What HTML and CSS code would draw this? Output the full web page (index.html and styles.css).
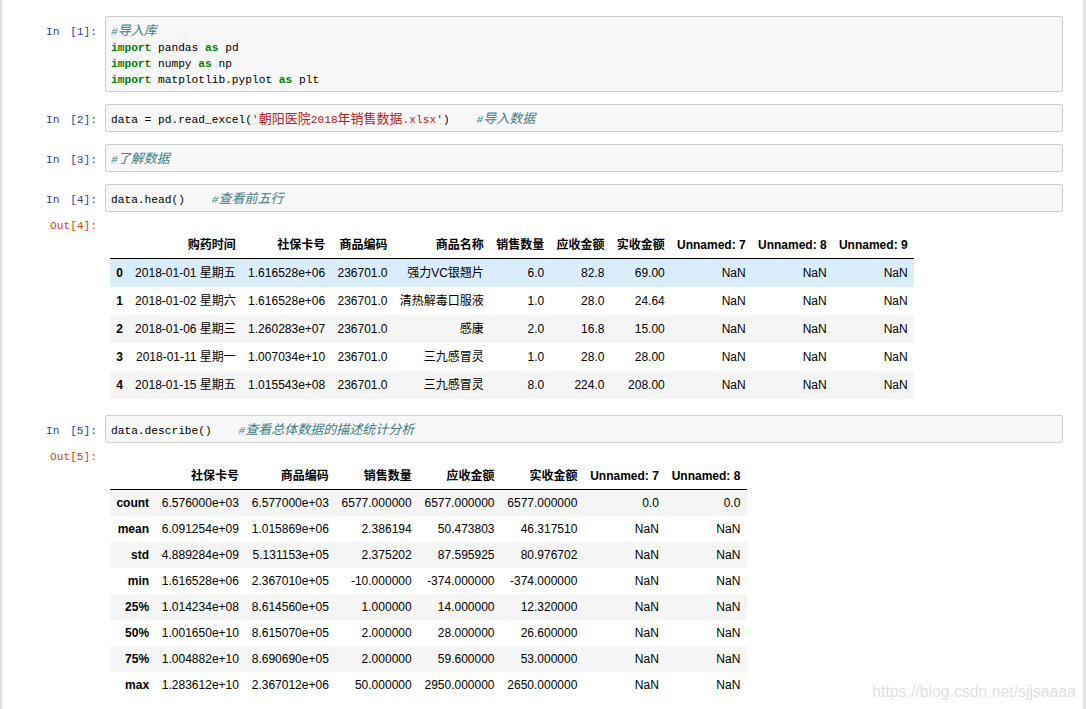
FILE: index.html
```html
<!DOCTYPE html>
<html lang="zh">
<head>
<meta charset="utf-8">
<title>Notebook</title>
<link rel="stylesheet" href="styles.css">
</head>
<body>
<div class="nb">
  <div class="cell">
    <div class="prompt pin">In [1]:</div>
    <div class="input"><pre><span class="c">#<span class="zh">导入库</span></span>
<span class="k">import</span> pandas <span class="k">as</span> pd
<span class="k">import</span> numpy <span class="k">as</span> np
<span class="k">import</span> matplotlib.pyplot <span class="k">as</span> plt</pre></div>
  </div>
  <div class="cell">
    <div class="prompt pin">In [2]:</div>
    <div class="input"><pre>data = pd.read_excel(<span class="s">'<span class="zh">朝阳医院</span>2018<span class="zh">年销售数据</span>.xlsx'</span>)    <span class="c">#<span class="zh">导入数据</span></span></pre></div>
  </div>
  <div class="cell">
    <div class="prompt pin">In [3]:</div>
    <div class="input"><pre><span class="c">#<span class="zh">了解数据</span></span></pre></div>
  </div>
  <div class="cell">
    <div class="prompt pin">In [4]:</div>
    <div class="input"><pre>data.head()    <span class="c">#<span class="zh">查看前五行</span></span></pre></div>
  </div>
  <div class="cell out">
    <div class="prompt pout">Out[4]:</div>
    <div class="output">
      <table class="df tall">
        <thead>
          <tr><th></th><th>购药时间</th><th>社保卡号</th><th>商品编码</th><th>商品名称</th><th>销售数量</th><th>应收金额</th><th>实收金额</th><th>Unnamed: 7</th><th>Unnamed: 8</th><th>Unnamed: 9</th></tr>
        </thead>
        <tbody>
          <tr class="hover"><th>0</th><td>2018-01-01 星期五</td><td>1.616528e+06</td><td>236701.0</td><td>强力VC银翘片</td><td>6.0</td><td>82.8</td><td>69.00</td><td>NaN</td><td>NaN</td><td>NaN</td></tr>
          <tr><th>1</th><td>2018-01-02 星期六</td><td>1.616528e+06</td><td>236701.0</td><td>清热解毒口服液</td><td>1.0</td><td>28.0</td><td>24.64</td><td>NaN</td><td>NaN</td><td>NaN</td></tr>
          <tr><th>2</th><td>2018-01-06 星期三</td><td>1.260283e+07</td><td>236701.0</td><td>感康</td><td>2.0</td><td>16.8</td><td>15.00</td><td>NaN</td><td>NaN</td><td>NaN</td></tr>
          <tr><th>3</th><td>2018-01-11 星期一</td><td>1.007034e+10</td><td>236701.0</td><td>三九感冒灵</td><td>1.0</td><td>28.0</td><td>28.00</td><td>NaN</td><td>NaN</td><td>NaN</td></tr>
          <tr><th>4</th><td>2018-01-15 星期五</td><td>1.015543e+08</td><td>236701.0</td><td>三九感冒灵</td><td>8.0</td><td>224.0</td><td>208.00</td><td>NaN</td><td>NaN</td><td>NaN</td></tr>
        </tbody>
      </table>
    </div>
  </div>
  <div class="cell after-out">
    <div class="prompt pin">In [5]:</div>
    <div class="input"><pre>data.describe()    <span class="c">#<span class="zh">查看总体数据的描述统计分析</span></span></pre></div>
  </div>
  <div class="cell out">
    <div class="prompt pout">Out[5]:</div>
    <div class="output">
      <table class="df wide">
        <thead>
          <tr><th></th><th>社保卡号</th><th>商品编码</th><th>销售数量</th><th>应收金额</th><th>实收金额</th><th>Unnamed: 7</th><th>Unnamed: 8</th></tr>
        </thead>
        <tbody>
          <tr><th>count</th><td>6.576000e+03</td><td>6.577000e+03</td><td>6577.000000</td><td>6577.000000</td><td>6577.000000</td><td>0.0</td><td>0.0</td></tr>
          <tr><th>mean</th><td>6.091254e+09</td><td>1.015869e+06</td><td>2.386194</td><td>50.473803</td><td>46.317510</td><td>NaN</td><td>NaN</td></tr>
          <tr><th>std</th><td>4.889284e+09</td><td>5.131153e+05</td><td>2.375202</td><td>87.595925</td><td>80.976702</td><td>NaN</td><td>NaN</td></tr>
          <tr><th>min</th><td>1.616528e+06</td><td>2.367010e+05</td><td>-10.000000</td><td>-374.000000</td><td>-374.000000</td><td>NaN</td><td>NaN</td></tr>
          <tr><th>25%</th><td>1.014234e+08</td><td>8.614560e+05</td><td>1.000000</td><td>14.000000</td><td>12.320000</td><td>NaN</td><td>NaN</td></tr>
          <tr><th>50%</th><td>1.001650e+10</td><td>8.615070e+05</td><td>2.000000</td><td>28.000000</td><td>26.600000</td><td>NaN</td><td>NaN</td></tr>
          <tr><th>75%</th><td>1.004882e+10</td><td>8.690690e+05</td><td>2.000000</td><td>59.600000</td><td>53.000000</td><td>NaN</td><td>NaN</td></tr>
          <tr><th>max</th><td>1.283612e+10</td><td>2.367012e+06</td><td>50.000000</td><td>2950.000000</td><td>2650.000000</td><td>NaN</td><td>NaN</td></tr>
        </tbody>
      </table>
    </div>
  </div>
  <div class="watermark">https://blog.csdn.net/sjjsaaaa</div>
</div>
</body>
</html>
```

FILE: styles.css
```css
html, body {
  margin: 0;
  padding: 0;
  background: #ffffff;
  overflow: hidden;
}

.nb {
  box-sizing: border-box;
  position: relative;
  width: 1086px;
  height: 709px;
  border-left: 2px solid #e0e0e0;
  border-right: 3px solid #e6e6e6;
  padding-top: 16px;
  overflow: hidden;
}

.cell {
  display: grid;
  grid-template-columns: 103px 958px;
  align-items: start;
}

.cell + .cell {
  margin-top: 12px;
}

.cell.out {
  margin-top: 8px;
}

.cell.after-out {
  margin-top: 16px;
}

.prompt {
  font-family: "Liberation Mono", "DejaVu Sans Mono", monospace;
  font-size: 11.2px;
  text-align: right;
  padding-right: 8px;
  white-space: pre;
}

.pin {
  color: #303f9f;
  line-height: 16px;
  padding-top: 8px;
  word-spacing: 4px;
}

.pout {
  color: #d84315;
  line-height: 12px;
  padding-top: 0;
}

.input {
  border: 1px solid #cfcfcf;
  border-radius: 2px;
  background: #f7f7f7;
  padding: 7px 5px 3px;
}

.input pre {
  margin: 0;
  font-family: "Liberation Mono", "Noto Sans CJK SC", monospace;
  font-size: 11.2px;
  line-height: 16px;
  color: #000000;
  white-space: pre;
}

.zh {
  font-family: "Noto Sans CJK SC", sans-serif;
  font-size: 13px;
  line-height: 10px;
}

.k {
  color: #008000;
  font-weight: bold;
}

.c {
  color: #408080;
  font-style: italic;
}

.s {
  color: #ba2121;
}

.output {
  padding-left: 5px;
}

.df {
  margin-top: 12px;
  border-collapse: collapse;
  border-spacing: 0;
  font-family: "Liberation Sans", "Noto Sans CJK SC", sans-serif;
  font-size: 12px;
  color: #000000;
}

.df th,
.df td {
  padding: 6px;
  line-height: 14px;
  text-align: right;
  vertical-align: middle;
  white-space: nowrap;
  border: none;
}

.df.wide th,
.df.wide td {
  padding-left: 6.4px;
  padding-right: 6.4px;
}

.df.tall th,
.df.tall td {
  padding-left: 6.15px;
  padding-right: 6.15px;
}

.df th {
  font-weight: bold;
}

.df thead {
  border-bottom: 1px solid #000000;
}

.df tbody tr:nth-child(odd) {
  background: #f5f5f5;
}

.df tbody tr.hover {
  background: #d9edfd;
}

.df.tall tbody th,
.df.tall tbody td {
  line-height: 16px;
}

.watermark {
  position: absolute;
  right: 7px;
  bottom: 7px;
  font-family: "Liberation Sans", Arial, sans-serif;
  font-size: 15.8px;
  line-height: 20px;
  color: #dfdfdf;
}
```
